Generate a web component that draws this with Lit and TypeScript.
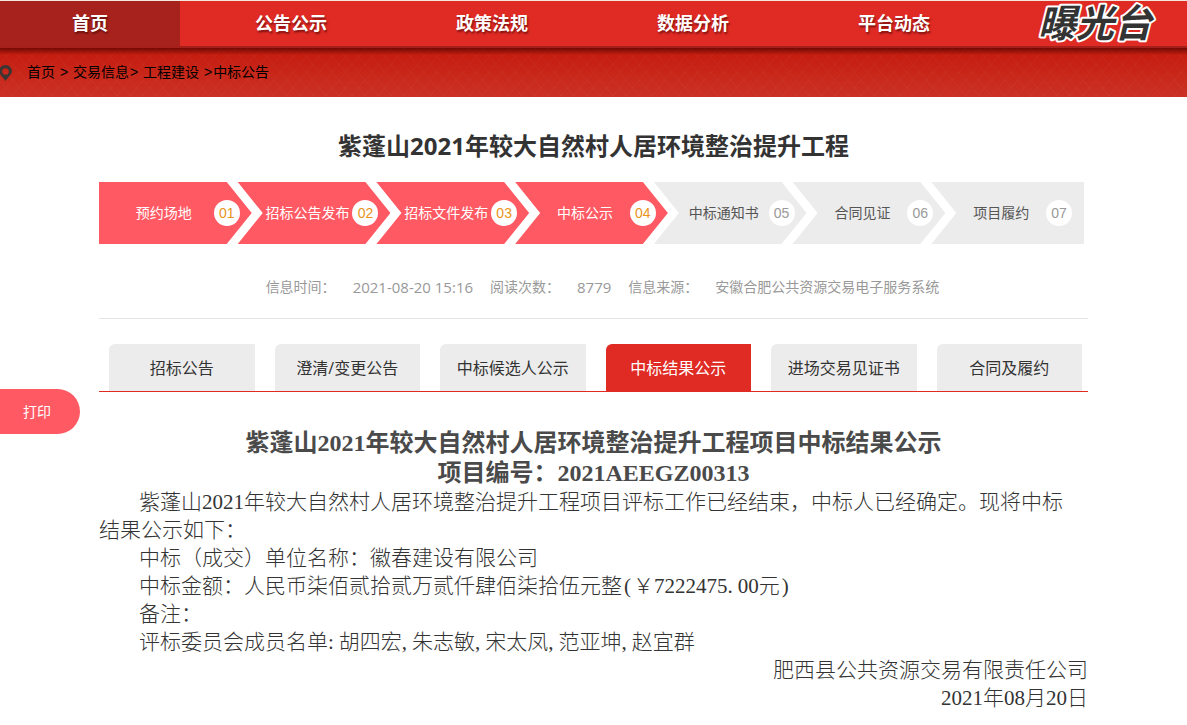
import { LitElement, html, css, svg } from "lit";
import { customElement } from "lit/decorators.js";
import { classMap } from "lit/directives/class-map.js";

const NAV = ["首页", "公告公示", "政策法规", "数据分析", "平台动态"];

const STEPS = [
  { label: "预约场地", no: "01", done: true },
  { label: "招标公告发布", no: "02", done: true },
  { label: "招标文件发布", no: "03", done: true },
  { label: "中标公示", no: "04", done: true },
  { label: "中标通知书", no: "05", done: false },
  { label: "合同见证", no: "06", done: false },
  { label: "项目履约", no: "07", done: false },
];

const TABS = ["招标公告", "澄清/变更公告", "中标候选人公示", "中标结果公示", "进场交易见证书", "合同及履约"];
const ACTIVE_TAB = 3;

const MEMBERS = ["胡四宏", "朱志敏", "宋太凤", "范亚坤", "赵宜群"];

@customElement("site-header")
class SiteHeader extends LitElement {
  static styles = css`
    :host {
      display: block;
      font-family: "Liberation Sans", "Noto Sans CJK SC", sans-serif;
    }
    a {
      color: inherit;
      text-decoration: none;
    }
    .nav {
      display: flex;
      gap: 21px;
      height: 45px;
      padding-right: 2px;
      border-top: 1px solid #f3e6dc;
      border-bottom: 2px solid #a5201b;
      background: #e02a24;
    }
    .item {
      flex: 1 1 0;
      line-height: 47px;
      text-align: center;
      font-size: 18px;
      font-weight: bold;
      color: #fff;
      text-shadow: 1px 2px 2px rgba(60, 0, 0, 0.6);
    }
    .item.active {
      background: #a8221d;
    }
    .expose {
      flex: 1 1 0;
      display: flex;
      justify-content: center;
      align-items: center;
    }
    .expose svg {
      display: block;
      overflow: visible;
    }
    .brush {
      font-family: "Noto Sans CJK SC", sans-serif;
      font-size: 38px;
      font-weight: bold;
      font-style: italic;
      fill: #333;
      stroke: #fff;
      stroke-width: 4px;
      stroke-linejoin: round;
      paint-order: stroke;
    }
    .crumbs {
      display: flex;
      align-items: center;
      height: 49px;
      font-size: 14px;
      line-height: 20px;
      color: #000;
      background:
        linear-gradient(rgba(70, 0, 0, 0.65), rgba(90, 0, 0, 0) 7px),
        repeating-linear-gradient(50deg, rgba(255, 255, 255, 0.025) 0 1px, transparent 1px 10px),
        repeating-linear-gradient(-50deg, rgba(255, 255, 255, 0.025) 0 1px, transparent 1px 10px),
        linear-gradient(#c41a0c, #cb3125);
    }
    .pin {
      width: 12px;
      height: 16px;
      margin-right: 15px;
    }
    .trail {
      padding-bottom: 2px;
    }
    .sep {
      padding: 0 1px;
    }
  `;

  render() {
    return html`
      <nav class="nav">
        ${NAV.map((t, i) => html`<a href="#" class=${classMap({ item: true, active: i === 0 })}>${t}</a>`)}
        <a href="#" class="expose">
          <svg width="160" height="45" viewBox="0 0 160 45">
            ${svg`<text class="brush" x="80" y="36" text-anchor="middle">曝光台</text>`}
          </svg>
        </a>
      </nav>
      <div class="crumbs">
        <svg class="pin" viewBox="0 0 12 16">
          <path
            fill="#3b3534"
            fill-rule="evenodd"
            d="M5.500 0C2 0-1 3-1 6.300C-1 9 2.500 11.500 5.500 16C8.500 11.500 12 9 12 6.300C12 3 9 0 5.500 0ZM5.500 3.200A3.300 3.300 0 1 1 5.500 9.800A3.300 3.300 0 1 1 5.500 3.200Z"
          ></path>
        </svg>
        <div class="trail">
          <a href="#">首页</a> <span class="sep">&gt;</span> <a href="#">交易信息</a
          ><span class="sep">&gt;</span> <a href="#">工程建设</a> <span class="sep">&gt;</span
          ><a href="#">中标公告</a>
        </div>
      </div>
    `;
  }
}

@customElement("process-steps")
class ProcessSteps extends LitElement {
  static styles = css`
    :host {
      display: block;
      font-family: "Liberation Sans", "Noto Sans CJK SC", sans-serif;
    }
    .steps {
      display: flex;
      margin: 0 4px 0 0;
      padding: 0;
      list-style: none;
    }
    .step {
      flex: 1 1 0;
      display: flex;
      align-items: center;
      box-sizing: border-box;
      height: 62px;
      padding: 0 12px 0 25px;
      background: #ececec;
      color: #555;
      font-size: 14px;
      clip-path: polygon(
        0 0,
        calc(100% - 25px) 0,
        100% 50%,
        calc(100% - 25px) 100%,
        0 100%,
        25px 50%
      );
    }
    .step + .step {
      margin-left: -14px;
    }
    .step:first-child {
      clip-path: polygon(0 0, calc(100% - 25px) 0, 100% 50%, calc(100% - 25px) 100%, 0 100%);
    }
    .step:first-child .label {
      margin-left: -10px;
    }
    .step:last-child {
      clip-path: polygon(0 0, 100% 0, 100% 100%, 0 100%, 25px 50%);
    }
    .done {
      background: #ff5a64;
      color: #fff;
    }
    .label {
      flex: 1;
      padding-bottom: 3px;
      text-align: center;
      white-space: nowrap;
    }
    .no {
      width: 26px;
      border-radius: 13px;
      background: #fff;
      line-height: 26px;
      text-align: center;
      color: #999;
    }
    .done .no {
      color: #e8941a;
    }
  `;

  render() {
    return html`
      <ol class="steps">
        ${STEPS.map(
          (s) => html`<li class=${classMap({ step: true, done: s.done })}>
            <span class="label">${s.label}</span><span class="no">${s.no}</span>
          </li>`
        )}
      </ol>
    `;
  }
}

@customElement("notice-tabs")
class NoticeTabs extends LitElement {
  static styles = css`
    :host {
      display: block;
    }
    .tabs {
      display: flex;
      gap: 20px;
      padding: 0 6px 0 10px;
      border-bottom: 1px solid #e02a24;
    }
    .tab {
      flex: 1 1 0;
      height: 47px;
      padding: 0 0 2px;
      border: 0;
      border-radius: 6px 0 0 0;
      background: #ececec;
      color: #333;
      font: 16px "Open Sans", "Noto Sans CJK SC", sans-serif;
      white-space: nowrap;
    }
    .active {
      background: #e02a24;
      color: #fff;
    }
  `;

  render() {
    return html`
      <div class="tabs" role="tablist">
        ${TABS.map(
          (t, i) => html`<button
            type="button"
            role="tab"
            aria-selected=${i === ACTIVE_TAB ? "true" : "false"}
            class=${classMap({ tab: true, active: i === ACTIVE_TAB })}
          >${t}</button>`
        )}
      </div>
    `;
  }
}

@customElement("app-root")
class AppRoot extends LitElement {
  static styles = css`
    :host {
      display: block;
      position: relative;
      background: #fff;
      font-family: "Open Sans", "Noto Sans CJK SC", sans-serif;
    }
    .main {
      padding: 32px 99px 12px;
    }
    .title {
      margin: 0 0 19px;
      text-align: center;
      font-size: 24px;
      line-height: 34px;
      color: #333;
    }
    .meta {
      display: flex;
      justify-content: center;
      gap: 17px;
      margin-bottom: 25px;
      padding: 29px 0 17px 18px;
      border-bottom: 1px solid #e5e5e5;
      font-size: 14px;
      line-height: 28px;
      color: #999;
      white-space: nowrap;
    }
    .figure {
      font-size: 15px;
    }
    .article {
      padding-top: 36px;
      font-family: "Liberation Serif", "Noto Sans CJK SC", serif;
      font-size: 21px;
      line-height: 28px;
      color: #333;
      font-weight: 300;
    }
    .heading {
      margin: 0;
      text-align: center;
      font-size: 24px;
      line-height: 30px;
      font-weight: bold;
      color: #4a4a4a;
    }
    .para {
      margin: 0;
      text-indent: 40px;
    }
    .sign {
      margin: 0;
      text-align: right;
    }
    .half {
      padding-right: 5px;
    }
    .paren {
      padding: 0 2px;
    }
    .print {
      position: absolute;
      left: 0;
      top: 389px;
      width: 80px;
      height: 45px;
      padding: 0 6px 2px 0;
      border: 0;
      border-radius: 0 23px 23px 0;
      background: #ff5a64;
      color: #fff;
      font: 14px "Noto Sans CJK SC", sans-serif;
    }
  `;

  render() {
    return html`
      <site-header></site-header>
      <main class="main">
        <h1 class="title">紫蓬山2021年较大自然村人居环境整治提升工程</h1>
        <process-steps></process-steps>
        <div class="meta">
          <span>信息时间：</span><span class="figure">2021-08-20 15:16</span>
          <span>阅读次数：</span><span class="figure">8779</span>
          <span>信息来源：</span><span>安徽合肥公共资源交易电子服务系统</span>
        </div>
        <notice-tabs></notice-tabs>
        <article class="article">
          <h2 class="heading">紫蓬山2021年较大自然村人居环境整治提升工程项目中标结果公示</h2>
          <h2 class="heading">项目编号：2021AEEGZ00313</h2>
          <p class="para">
            紫蓬山2021年较大自然村人居环境整治提升工程项目评标工作已经结束，中标人已经确定。现将中标<br />结果公示如下：
          </p>
          <p class="para">中标（成交）单位名称：徽春建设有限公司</p>
          <p class="para">中标金额：人民币柒佰贰拾贰万贰仟肆佰柒拾伍元整<span class="paren">(</span>￥7222475<span class="half">.</span>00元<span class="paren">)</span></p>
          <p class="para">备注：</p>
          <p class="para">评标委员会成员名单<span class="half">:</span>${MEMBERS.map(
            (m, i) => html`${i ? html`<span class="half">,</span>` : ""}${m}`
          )}</p>
          <p class="sign">肥西县公共资源交易有限责任公司</p>
          <p class="sign">2021年08月20日</p>
        </article>
      </main>
      <button type="button" class="print">打印</button>
    `;
  }
}
